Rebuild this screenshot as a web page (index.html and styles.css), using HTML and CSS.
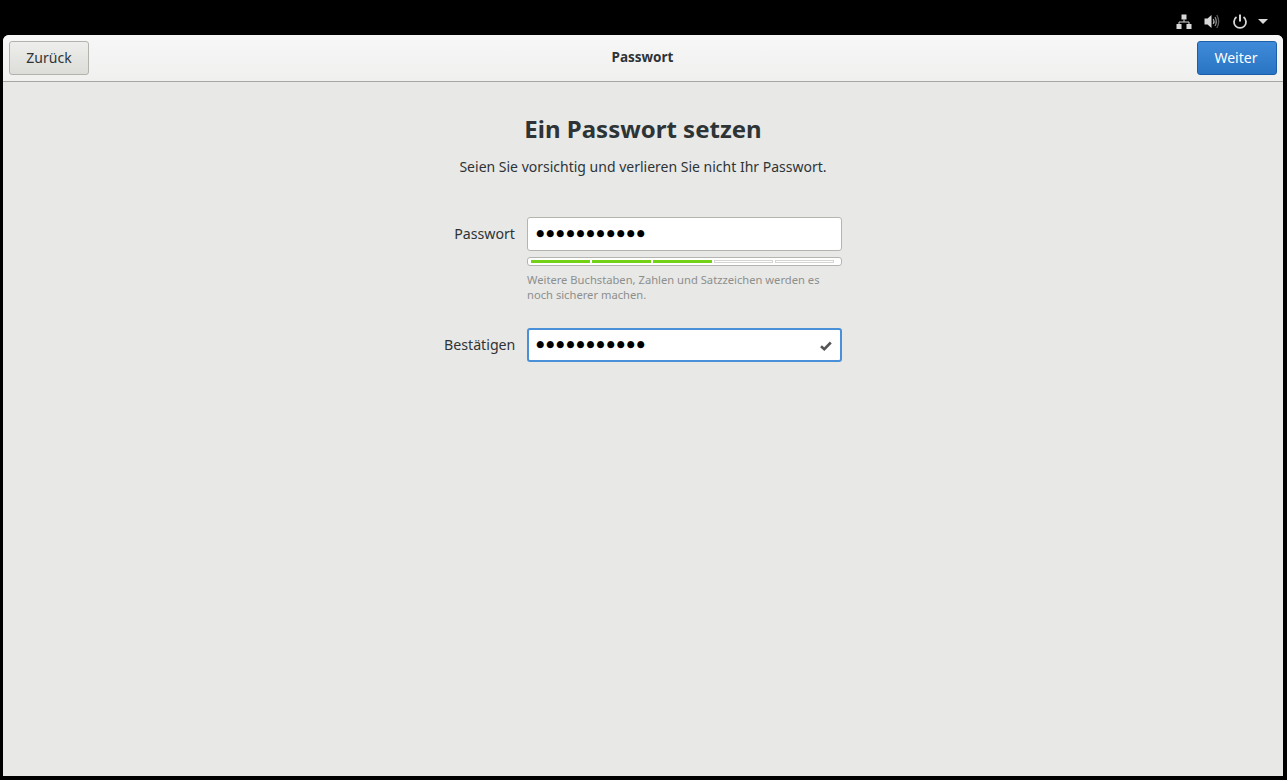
FILE: index.html
```html
<!DOCTYPE html>
<html lang="de">
<head>
    <meta charset="UTF-8">
    <meta name="viewport" content="width=device-width, initial-scale=1.0">
    <title>Passwort</title>
    <link rel="stylesheet" href="styles.css">
</head>
<body>
    <div class="top-bar">
        <svg class="tray-icon network" width="16" height="16" viewBox="0 0 16 16">
            <path fill="#d8d8d8" d="M5.500 0.500h5v5h-5zM0.500 10h5v5h-5zM10.500 10h5v5h-5z"/>
            <path fill="none" stroke="#d8d8d8" stroke-width="1" d="M8 5.500v2.500M3 10V8h10v2"/>
        </svg>
        <svg class="tray-icon volume" width="16" height="16" viewBox="0 0 16 16">
            <path fill="#d8d8d8" d="M0.500 4.500h3L7.500 1v13L3.500 10.500h-3z"/>
            <path fill="none" stroke="#a8a8a8" stroke-width="1.300" d="M9.300 5q1.500 2.500 0 5"/>
            <path fill="none" stroke="#8a8a8a" stroke-width="1.300" d="M11 3q2.600 4.500 0 9"/>
            <path fill="none" stroke="#5e5e5e" stroke-width="1.300" d="M12.800 1q3.800 6.500 0 13"/>
        </svg>
        <svg class="tray-icon power" width="16" height="16" viewBox="0 0 16 16">
            <path fill="none" stroke="#d8d8d8" stroke-width="1.800" d="M4.500 3.100a6 6 0 1 0 7 0"/>
            <path fill="none" stroke="#d8d8d8" stroke-width="2" d="M8 0.500v7"/>
        </svg>
        <svg class="tray-arrow" width="10" height="5" viewBox="0 0 10 5">
            <path fill="#d8d8d8" d="M0 0h10L5 5z"/>
        </svg>
    </div>

    <div class="window">
        <header class="header-bar">
            <button class="btn">Zurück</button>
            <h2 class="header-title">Passwort</h2>
            <button class="btn btn-primary">Weiter</button>
        </header>

        <main class="content">
            <h1 class="page-title">Ein Passwort setzen</h1>
            <p class="page-subtitle">Seien Sie vorsichtig und verlieren Sie nicht Ihr Passwort.</p>

            <div class="form-grid">
                <label class="form-label">Passwort</label>
                <div class="entry"><span class="dots">●●●●●●●●●●●</span></div>

                <div class="strength">
                    <div class="level-bar">
                        <span class="level on"></span>
                        <span class="level on"></span>
                        <span class="level on"></span>
                        <span class="level"></span>
                        <span class="level"></span>
                    </div>
                    <p class="hint">Weitere Buchstaben, Zahlen und Satzzeichen werden es noch sicherer machen.</p>
                </div>

                <label class="form-label">Bestätigen</label>
                <div class="entry entry-focus">
                    <span class="dots">●●●●●●●●●●●</span>
                    <svg class="check" width="12" height="10" viewBox="0 0 12 10">
                        <path fill="none" stroke="#555" stroke-width="2.600" d="M1 5.200l3.300 3L10.800 1.500"/>
                    </svg>
                </div>
            </div>
        </main>
    </div>
</body>
</html>
```
FILE: styles.css
```css
html, body {
    height: 100%;
}
body {
    margin: 0;
    background-color: #000;
    font-family: "Noto Sans", "Open Sans", sans-serif;
    color: #2e3436;
    display: flex;
    flex-direction: column;
    overflow: hidden;
}
.top-bar {
    height: 35px;
    flex: none;
    display: flex;
    align-items: center;
    justify-content: flex-end;
    padding: 8px 19px 0 0;
    box-sizing: border-box;
}
.tray-icon {
    margin-left: 12px;
}
.tray-arrow {
    margin-left: 10px;
}
.window {
    flex: 1;
    margin: 0 4px 4px 3px;
    background-color: #e8e8e7;
    border-radius: 6px 6px 0 0;
    display: flex;
    flex-direction: column;
    min-height: 0;
}
.header-bar {
    height: 47px;
    flex: none;
    box-sizing: border-box;
    padding: 6px;
    display: flex;
    align-items: flex-start;
    justify-content: space-between;
    background: linear-gradient(#f7f7f7, #f0f0ef);
    border-bottom: 1px solid #a5a5a1;
    border-radius: 6px 6px 0 0;
}
.header-title {
    margin: 0 1px 0 0;
    font-size: 13.500px;
    font-weight: 700;
    line-height: 32px;
    color: #2e3436;
}
.btn {
    width: 80px;
    height: 34px;
    box-sizing: border-box;
    border: 1px solid #b3b3ae;
    border-radius: 3px;
    background: linear-gradient(#eeeeec, #dcdcd9);
    font-family: inherit;
    font-size: 14px;
    color: #2e3436;
    padding: 0 0 2px;
}
.btn-primary {
    border-color: #1b5fa8;
    background: linear-gradient(#3f8ad9, #2a74c4);
    color: #fff;
    padding-right: 2px;
}
.content {
    display: flex;
    flex-direction: column;
    align-items: center;
    padding-top: 30px;
}
.page-title {
    margin: 0;
    font-size: 24px;
    line-height: 33px;
    font-weight: 700;
}
.page-subtitle {
    margin: 12px 0 0;
    font-size: 14px;
    line-height: 19px;
}
.form-grid {
    display: grid;
    grid-template-columns: 71px 315px;
    column-gap: 12px;
    margin-top: 41px;
    align-items: center;
}
.form-label {
    text-align: right;
    font-size: 14.200px;
    white-space: nowrap;
    padding-bottom: 2px;
}
.entry {
    height: 34px;
    box-sizing: border-box;
    border: 1px solid #b5b5b0;
    border-radius: 3px;
    background-color: #fff;
    display: flex;
    align-items: center;
    justify-content: space-between;
    padding: 0 9px 0 8px;
}
.entry-focus {
    border: 2px solid #4a90d9;
    padding: 0 8px 0 7px;
}
.dots {
    font-family: "DejaVu Sans", sans-serif;
    font-size: 9.200px;
    letter-spacing: 2.040px;
    line-height: 1;
    color: #000;
    padding-bottom: 2px;
}
.check {
    margin-top: 1px;
}
.strength {
    grid-column: 2;
    padding-top: 6px;
    height: 77px;
    box-sizing: border-box;
}
.level-bar {
    height: 9px;
    box-sizing: border-box;
    border: 1px solid #b5b5b0;
    border-radius: 3px;
    background-color: #fff;
    padding: 2px 7px 0 3px;
    display: flex;
    gap: 2px;
}
.level {
    flex: 1;
    border: 1px solid #d5d5d2;
    height: 3px;
    box-sizing: border-box;
}
.level.on {
    background-color: #73d216;
    border-color: #73d216;
}
.hint {
    margin: 6px 0 0;
    font-size: 11.200px;
    line-height: 15px;
    color: #8d8f8c;
}
```
